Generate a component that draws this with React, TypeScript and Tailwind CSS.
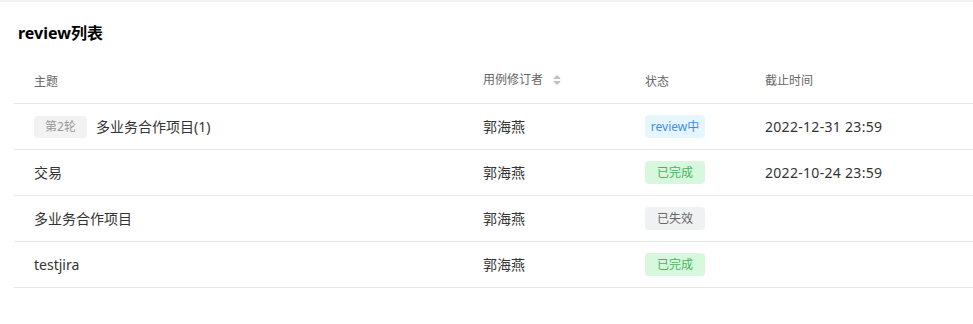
import React from "react";

type Row = {
  round?: string;
  title: string;
  owner: string;
  status: "review" | "done" | "expired";
  deadline?: string;
};

const ROWS: Row[] = [
  { round: "第2轮", title: "多业务合作项目(1)", owner: "郭海燕", status: "review", deadline: "2022-12-31 23:59" },
  { title: "交易", owner: "郭海燕", status: "done", deadline: "2022-10-24 23:59" },
  { title: "多业务合作项目", owner: "郭海燕", status: "expired" },
  { title: "testjira", owner: "郭海燕", status: "done" },
];

const STATUS = {
  review: { label: "review中", cls: "bg-[#e6f6ff] text-[#3b8cf5]" },
  done: { label: "已完成", cls: "bg-[#d7f8dc] text-[#49b35c]" },
  expired: { label: "已失效", cls: "bg-[#f0f1f3] text-[#666666]" },
};

const COLS = "grid grid-cols-[449px_162px_120px_1fr]";

const SortIcon = () => (
  <svg width="8" height="10" viewBox="0 0 8 10" className="ml-[10px] mt-[1px]">
    <path d="M4 0 L8 4 L0 4 Z" fill="#bfbfbf" />
    <path d="M4 10 L8 6 L0 6 Z" fill="#bfbfbf" />
  </svg>
);

export default function App() {
  return (
    <div
      className="min-h-[324px] bg-white border-t-2 border-[#f3f3f3]"
      style={{ fontFamily: '"Noto Sans", "Noto Sans CJK SC", sans-serif' }}
    >
      <h2 className="pl-[18px] pt-[20px] text-[16px] leading-[22px] font-bold text-black">review列表</h2>

      <div className="ml-[14px] mt-[15px]">
        <div className={`${COLS} h-[45px] items-center border-b border-[#e5e7eb] text-[12px] text-[#666666]`}>
          <div className="pl-[20px] pt-[2px]">主题</div>
          <div className="pl-[20px] flex items-center -mt-[3px]">
            用例修订者
            <SortIcon />
          </div>
          <div className="pl-[20px] pt-[2px]">状态</div>
          <div className="pl-[20px]">截止时间</div>
        </div>

        {ROWS.map((r, i) => (
          <div
            key={i}
            className={`${COLS} h-[46px] items-center border-b border-[#e5e7eb] text-[14px] text-[#333333]`}
          >
            <div className="pl-[20px] flex items-center">
              {r.round && (
                <span className="mr-[9px] h-[22px] w-[53px] rounded-[4px] bg-[#f2f2f2] text-[12px] text-[#999999] flex items-center justify-center">
                  {r.round}
                </span>
              )}
              {r.title}
            </div>
            <div className="pl-[20px]">{r.owner}</div>
            <div className="pl-[20px]">
              <span
                className={`inline-flex h-[23px] w-[60px] items-center justify-center rounded-[4px] text-[12px] ${STATUS[r.status].cls}`}
              >
                {STATUS[r.status].label}
              </span>
            </div>
            <div className="pl-[20px] tracking-[0.3px]">{r.deadline}</div>
          </div>
        ))}
      </div>
    </div>
  );
}
